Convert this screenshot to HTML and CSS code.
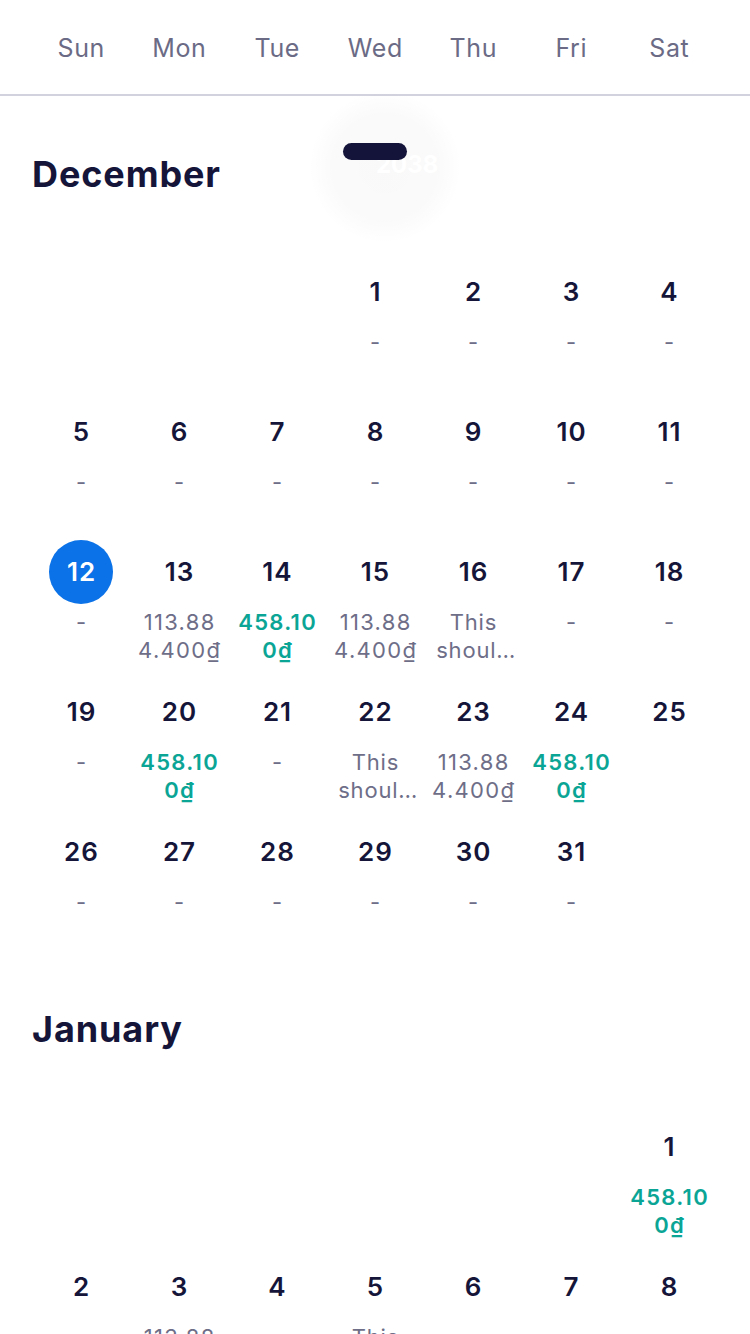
FILE: index.html
```html
<!DOCTYPE html>
<html lang="en">
<head>
<meta charset="utf-8">
<title>Calendar</title>
<link rel="stylesheet" href="styles.css">
</head>
<body>
<div class="app">
  <header class="weekdays">
    <div class="wd">Sun</div><div class="wd">Mon</div><div class="wd">Tue</div><div class="wd">Wed</div><div class="wd">Thu</div><div class="wd">Fri</div><div class="wd">Sat</div>
  </header>

  <main class="months">
    <section class="month">
      <h2 class="month-title">December</h2>
      <div class="grid">
        <div class="cell start-4"><div class="num">1</div><div class="val">-</div></div>
        <div class="cell"><div class="num">2</div><div class="val">-</div></div>
        <div class="cell"><div class="num">3</div><div class="val">-</div></div>
        <div class="cell"><div class="num">4</div><div class="val">-</div></div>
        <div class="cell"><div class="num">5</div><div class="val">-</div></div>
        <div class="cell"><div class="num">6</div><div class="val">-</div></div>
        <div class="cell"><div class="num">7</div><div class="val">-</div></div>
        <div class="cell"><div class="num">8</div><div class="val">-</div></div>
        <div class="cell"><div class="num">9</div><div class="val">-</div></div>
        <div class="cell"><div class="num">10</div><div class="val">-</div></div>
        <div class="cell"><div class="num">11</div><div class="val">-</div></div>
        <div class="cell"><div class="num today"><span>12</span></div><div class="val">-</div></div>
        <div class="cell"><div class="num">13</div><div class="val">113.88<wbr>4.400₫</div></div>
        <div class="cell"><div class="num">14</div><div class="val green">458.10<wbr>0₫</div></div>
        <div class="cell"><div class="num">15</div><div class="val">113.88<wbr>4.400₫</div></div>
        <div class="cell"><div class="num">16</div><div class="val note">This should be truncated</div></div>
        <div class="cell"><div class="num">17</div><div class="val">-</div></div>
        <div class="cell"><div class="num">18</div><div class="val">-</div></div>
        <div class="cell"><div class="num">19</div><div class="val">-</div></div>
        <div class="cell"><div class="num">20</div><div class="val green">458.10<wbr>0₫</div></div>
        <div class="cell"><div class="num">21</div><div class="val">-</div></div>
        <div class="cell"><div class="num">22</div><div class="val note">This should be truncated</div></div>
        <div class="cell"><div class="num">23</div><div class="val">113.88<wbr>4.400₫</div></div>
        <div class="cell"><div class="num">24</div><div class="val green">458.10<wbr>0₫</div></div>
        <div class="cell"><div class="num">25</div></div>
        <div class="cell"><div class="num">26</div><div class="val">-</div></div>
        <div class="cell"><div class="num">27</div><div class="val">-</div></div>
        <div class="cell"><div class="num">28</div><div class="val">-</div></div>
        <div class="cell"><div class="num">29</div><div class="val">-</div></div>
        <div class="cell"><div class="num">30</div><div class="val">-</div></div>
        <div class="cell"><div class="num">31</div><div class="val">-</div></div>
      </div>
    </section>

    <section class="month">
      <h2 class="month-title">January</h2>
      <div class="grid">
        <div class="cell start-7"><div class="num">1</div><div class="val green">458.10<wbr>0₫</div></div>
        <div class="cell"><div class="num">2</div><div class="val">-</div></div>
        <div class="cell"><div class="num">3</div><div class="val">113.88<wbr>4.400₫</div></div>
        <div class="cell"><div class="num">4</div><div class="val">-</div></div>
        <div class="cell"><div class="num">5</div><div class="val note">This should be truncated</div></div>
        <div class="cell"><div class="num">6</div><div class="val">-</div></div>
        <div class="cell"><div class="num">7</div><div class="val">-</div></div>
        <div class="cell"><div class="num">8</div><div class="val">-</div></div>
      </div>
    </section>
  </main>

  <div class="year-indicator">
    <div class="year-glow"></div>
    <div class="year-text">2038</div>
    <div class="year-pill"></div>
  </div>
</div>
</body>
</html>
```

FILE: styles.css
```css
* { box-sizing: border-box; }

html, body {
  margin: 0;
  padding: 0;
  background: #ffffff;
}

body {
  font-family: Inter, "Noto Sans", "Liberation Sans", sans-serif;
  color: #15153a;
  overflow: hidden;
}

.app {
  position: relative;
  width: 750px;
  height: 1334px;
  overflow: hidden;
}

.weekdays {
  display: grid;
  grid-template-columns: repeat(7, 98px);
  padding: 2px 32px 0;
  height: 96px;
  border-bottom: 2px solid #d2d2de;
}

.wd {
  text-align: center;
  font-size: 25px;
  line-height: 92px;
  letter-spacing: 0.6px;
  padding-left: 0.6px;
  color: #6b6b86;
}

.months {
  padding-top: 9px;
}

.month {
  padding-top: 47px;
}

.month-title {
  margin: 0;
  padding-left: 32px;
  font-size: 36px;
  line-height: 44px;
  font-weight: 700;
  color: #15153a;
  letter-spacing: 0.9px;
}

.grid {
  display: grid;
  grid-template-columns: repeat(7, 98px);
  grid-auto-rows: 140px;
  padding: 0 32px;
  margin-top: 64px;
}

.start-4 { grid-column-start: 4; }
.start-7 { grid-column-start: 7; }

.cell {
  display: flex;
  flex-direction: column;
  align-items: center;
}

.num {
  height: 64px;
  line-height: 64px;
  font-size: 26px;
  font-weight: 600;
  letter-spacing: 1px;
  padding-left: 1px;
  color: #15153a;
  text-align: center;
}

.num.today {
  padding-left: 0;
}

.num.today span {
  display: flex;
  align-items: center;
  justify-content: center;
  width: 64px;
  height: 64px;
  padding-left: 1px;
  border-radius: 50%;
  background: #0b72e7;
  color: #ffffff;
  font-weight: 600;
}

.val {
  margin-top: 4px;
  width: 94px;
  padding-left: 1.3px;
  font-size: 22px;
  line-height: 28px;
  letter-spacing: 1.3px;
  color: #6e6e88;
  text-align: center;
}

.val.green {
  color: #0ba596;
  font-weight: 600;
}

.val.note {
  width: 88px;
  padding-left: 0.8px;
  letter-spacing: 0.8px;
  display: -webkit-box;
  -webkit-box-orient: vertical;
  -webkit-line-clamp: 2;
  overflow: hidden;
}

.year-indicator {
  position: absolute;
  left: 310px;
  top: 92px;
  width: 150px;
  height: 150px;
}

.year-glow {
  position: absolute;
  inset: 0;
  border-radius: 50%;
  background: radial-gradient(circle, rgba(0,0,0,0.025) 0%, rgba(0,0,0,0.02) 50%, rgba(0,0,0,0) 72%);
}

.year-text {
  position: absolute;
  left: 66px;
  top: 58px;
  font-size: 24px;
  line-height: 30px;
  font-weight: 700;
  color: #ffffff;
}

.year-pill {
  position: absolute;
  left: 33px;
  top: 51px;
  width: 64px;
  height: 17px;
  border-radius: 9px;
  background: #14143a;
}
```
